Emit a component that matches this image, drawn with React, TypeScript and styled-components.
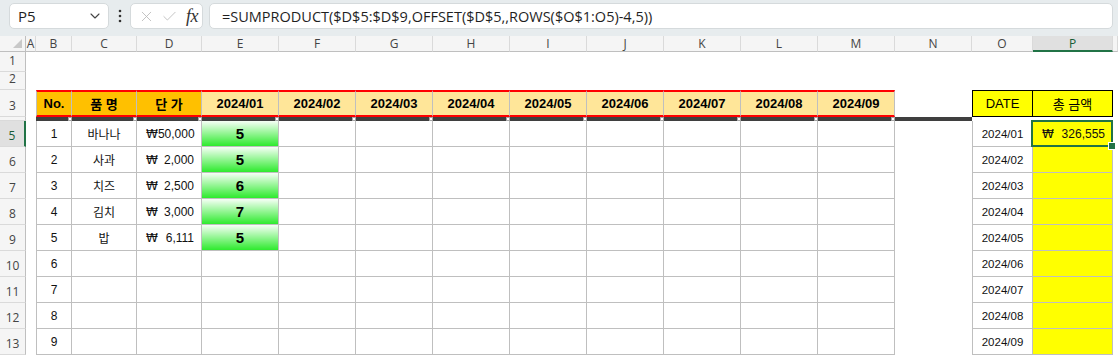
import React from "react";
import styled, { createGlobalStyle, css } from "styled-components";
import { ChevronDown, X, Check } from "lucide-react";

const GlobalStyle = createGlobalStyle`
  html, body {
    margin: 0;
    padding: 0;
    background: #fff;
    overflow: hidden;
  }
  body {
    font-family: "Liberation Sans", "Noto Sans CJK KR", sans-serif;
  }
`;

const GRID = "#bfbfbf";
const HEAD_BG = "#f5f5f5";
const SEL_GREEN = "#217346";

const LETTERS = ["A", "B", "C", "D", "E", "F", "G", "H", "I", "J", "K", "L", "M", "N", "O", "P"];
const WIDTHS = [10, 36, 65, 65, 77, 77, 77, 77, 77, 77, 77, 77, 77, 77, 61, 80];
const MONTHS = ["01", "02", "03", "04", "05", "06", "07", "08", "09"];

const items = [
  { no: 1, name: "바나나", price: "50,000", qty: 5 },
  { no: 2, name: "사과", price: "2,000", qty: 5 },
  { no: 3, name: "치즈", price: "2,500", qty: 6 },
  { no: 4, name: "김치", price: "3,000", qty: 7 },
  { no: 5, name: "밥", price: "6,111", qty: 5 },
  { no: 6 },
  { no: 7 },
  { no: 8 },
  { no: 9 },
];

const Page = styled.div`
  width: 1118px;
  height: 362px;
  display: flex;
  flex-direction: column;
  overflow: hidden;
  background: #fff;
`;

/* ---------- formula bar ---------- */

const FormulaBar = styled.div`
  height: 36px;
  flex: none;
  box-sizing: border-box;
  background: #e7ecee;
  display: flex;
  align-items: flex-start;
  padding: 3px 5px 0 9px;
`;

const Box = styled.div`
  height: 26px;
  box-sizing: border-box;
  background: #fff;
  border: 1px solid #d5dadc;
  border-radius: 5px;
  display: flex;
  align-items: center;
`;

const NameBox = styled(Box)`
  width: 100px;
  padding: 0 5px 0 8px;
  justify-content: space-between;
  font-family: "Open Sans", sans-serif;
  font-size: 15px;
  color: #1f1f1f;
`;

const Kebab = styled.div`
  width: 21px;
  height: 26px;
  display: flex;
  align-items: center;
  justify-content: center;
`;

const FxBox = styled(Box)`
  width: 73px;
  padding: 0 4px 0 7px;
  gap: 6px;
  color: #b9b9b9;
`;

const FxLabel = styled.span`
  font-family: "Liberation Serif", serif;
  font-style: italic;
  font-size: 18px;
  color: #333;
  margin-left: 2px;
  letter-spacing: -0.5px;
`;

const FormulaInput = styled(Box)`
  flex: 1;
  margin-left: 6px;
  padding-left: 12px;
  font-family: "Open Sans", sans-serif;
  font-size: 14.5px;
  color: #1f1f1f;
`;

/* ---------- sheet grid ---------- */

const Sheet = styled.div`
  flex: 1;
  display: grid;
  grid-template-columns: 26px ${WIDTHS.map((w) => `${w}px`).join(" ")} 1fr;
  grid-template-rows: 16px 20px 18px 27px 4px repeat(9, 26px) 1fr;
`;

const Corner = styled.div`
  background: ${HEAD_BG};
  border-right: 1px solid ${GRID};
  border-bottom: 1px solid ${GRID};
  display: flex;
  align-items: flex-end;
  justify-content: flex-end;
  padding: 0 3px 3px 0;
  box-sizing: border-box;
`;

const ColHead = styled.div<{ $selected?: boolean }>`
  background: ${(p) => (p.$selected ? "#e0e0e0" : HEAD_BG)};
  border-right: 1px solid #dadada;
  border-bottom: ${(p) => (p.$selected ? `2px solid ${SEL_GREEN}` : `1px solid ${GRID}`)};
  box-sizing: border-box;
  display: flex;
  align-items: center;
  justify-content: center;
  font-family: "Open Sans", sans-serif;
  font-size: 12px;
  color: ${(p) => (p.$selected ? "#185c37" : "#444")};
  overflow: hidden;
`;

const RowHead = styled.div<{ $selected?: boolean }>`
  background: ${(p) => (p.$selected ? "#e0e0e0" : HEAD_BG)};
  border-right: ${(p) => (p.$selected ? `2px solid ${SEL_GREEN}` : `1px solid ${GRID}`)};
  border-bottom: 1px solid #dadada;
  box-sizing: border-box;
  display: flex;
  align-items: flex-end;
  justify-content: center;
  padding-bottom: 2px;
  font-family: "Open Sans", sans-serif;
  font-size: 12px;
  color: ${(p) => (p.$selected ? "#185c37" : "#444")};
`;

const Blank = styled.div``;

const HeadCell = styled.div<{ $fill: string; $first?: boolean }>`
  background: ${(p) => p.$fill};
  border-top: 2px solid #ff0000;
  border-bottom: 2px solid #ff0000;
  border-right: 1px solid ${GRID};
  ${(p) => p.$first && css`border-left: 1px solid ${GRID};`}
  box-sizing: border-box;
  display: flex;
  align-items: center;
  justify-content: center;
  font-family: "Liberation Sans", "Noto Sans CJK KR", sans-serif;
  font-weight: 700;
  font-size: 13px;
  color: #000;
  white-space: pre;
`;

const ThickRule = styled.div`
  background: #3f3f3f;
  display: flex;
  justify-content: flex-end;
  align-items: center;
`;

const Marker = styled.span`
  width: 4px;
  height: 4px;
  box-sizing: border-box;
  background: #fff;
  border: 1px solid #a6a6a6;
`;

const Cell = styled.div<{ $first?: boolean; $fill?: string; $align?: "center" | "split"; $small?: boolean }>`
  position: relative;
  background: ${(p) => p.$fill ?? "#fff"};
  border-right: 1px solid ${GRID};
  border-bottom: 1px solid ${GRID};
  ${(p) => p.$first && css`border-left: 1px solid ${GRID};`}
  box-sizing: border-box;
  display: flex;
  align-items: center;
  justify-content: ${(p) => (p.$align === "split" ? "space-between" : "center")};
  padding: ${(p) => (p.$align === "split" ? "0 7px 0 9px" : "0")};
  font-family: "Liberation Sans", "Noto Sans CJK KR", sans-serif;
  font-size: ${(p) => (p.$small ? "11.5px" : "12px")};
  color: #111;
`;

const QtyCell = styled(Cell)`
  background: linear-gradient(to bottom, #f6fff6 0%, #a6f7a6 40%, #2eea2e 100%);
  font-weight: 700;
  font-size: 15px;
  color: #000;
`;

const DateHead = styled.div<{ $first?: boolean }>`
  background: #ffff00;
  border-top: 1px solid #000;
  border-bottom: 1px solid #000;
  border-right: 1px solid #000;
  ${(p) => p.$first && css`border-left: 1px solid #000;`}
  box-sizing: border-box;
  display: flex;
  align-items: center;
  justify-content: center;
  font-family: "Liberation Sans", "Noto Sans CJK KR", sans-serif;
  font-size: 13px;
  color: #000;
  white-space: pre;
`;

const Won = styled.span`
  font-family: "DejaVu Sans", sans-serif;
  font-size: 12px;
`;

const Selection = styled.div`
  position: absolute;
  top: -1px;
  left: -2px;
  right: -1px;
  bottom: -1px;
  border: 2px solid ${SEL_GREEN};
  pointer-events: none;
  z-index: 2;
`;

const FillHandle = styled.span`
  position: absolute;
  right: -5px;
  bottom: -5px;
  width: 6px;
  height: 6px;
  background: ${SEL_GREEN};
  border: 1px solid #fff;
`;

function Money({ value }: { value: string }) {
  return (
    <>
      <Won>₩</Won>
      <span>{value}</span>
    </>
  );
}

function EmptyRow({ n }: { n: number }) {
  return (
    <>
      <RowHead>{n}</RowHead>
      {LETTERS.map((l) => (
        <Blank key={l} />
      ))}
      <Blank />
    </>
  );
}

export default function App() {
  return (
    <Page>
      <GlobalStyle />
      <FormulaBar>
        <NameBox>
          <span>P5</span>
          <ChevronDown size={16} strokeWidth={1.6} color="#444" />
        </NameBox>
        <Kebab>
          <svg width="4" height="14" viewBox="0 0 4 14">
            <circle cx="2" cy="2" r="1.3" fill="#333" />
            <circle cx="2" cy="7" r="1.3" fill="#333" />
            <circle cx="2" cy="12" r="1.3" fill="#333" />
          </svg>
        </Kebab>
        <FxBox>
          <X size={17} strokeWidth={1.2} />
          <Check size={17} strokeWidth={1.2} />
          <FxLabel>fx</FxLabel>
        </FxBox>
        <FormulaInput>=SUMPRODUCT($D$5:$D$9,OFFSET($D$5,,ROWS($O$1:O5)-4,5))</FormulaInput>
      </FormulaBar>

      <Sheet>
        {/* column letters */}
        <Corner>
          <svg width="9" height="9" viewBox="0 0 9 9">
            <path d="M9 0 L9 9 L0 9 Z" fill="#c8c8c8" />
          </svg>
        </Corner>
        {LETTERS.map((l) => (
          <ColHead key={l} $selected={l === "P"}>
            {l}
          </ColHead>
        ))}
        <ColHead />

        <EmptyRow n={1} />
        <EmptyRow n={2} />

        {/* row 3: headers */}
        <RowHead>3</RowHead>
        <Blank />
        <HeadCell $fill="#ffc000" $first>No.</HeadCell>
        <HeadCell $fill="#ffc000">품 명</HeadCell>
        <HeadCell $fill="#ffc000">단 가</HeadCell>
        {MONTHS.map((m) => (
          <HeadCell key={m} $fill="#ffe699">
            2024/{m}
          </HeadCell>
        ))}
        <Blank />
        <DateHead $first>DATE</DateHead>
        <DateHead>총 금액</DateHead>
        <Blank />

        {/* row 4: hidden, shows as thick rule */}
        <RowHead />
        <Blank />
        {LETTERS.slice(1, 13).map((l) => (
          <ThickRule key={l}>
            <Marker />
          </ThickRule>
        ))}
        <ThickRule />
        <Blank />
        <Blank />
        <Blank />

        {/* rows 5 - 13 */}
        {items.map((it, i) => (
          <React.Fragment key={it.no}>
            <RowHead $selected={i === 0}>{i + 5}</RowHead>
            <Blank />
            <Cell $first>{it.no}</Cell>
            <Cell>{it.name}</Cell>
            <Cell $align={it.price ? "split" : "center"}>{it.price && <Money value={it.price} />}</Cell>
            {it.qty ? <QtyCell>{it.qty}</QtyCell> : <Cell />}
            {MONTHS.slice(1).map((m) => (
              <Cell key={m} />
            ))}
            <Blank />
            <Cell $first $small>2024/{MONTHS[i]}</Cell>
            <Cell $fill="#ffff00" $align={i === 0 ? "split" : "center"}>
              {i === 0 && (
                <>
                  <Money value="326,555" />
                  <Selection>
                    <FillHandle />
                  </Selection>
                </>
              )}
            </Cell>
            <Blank />
          </React.Fragment>
        ))}
      </Sheet>
    </Page>
  );
}
